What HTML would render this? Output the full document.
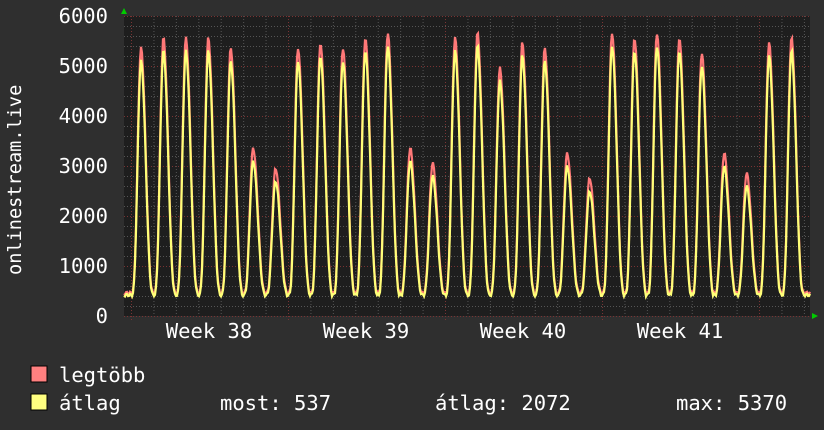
<!DOCTYPE html>
<html><head><meta charset="utf-8"><style>
html,body{margin:0;padding:0;background:#2f2f2f;width:824px;height:430px;overflow:hidden}
svg{display:block}
text{font-family:"DejaVu Sans Mono","Liberation Mono",monospace;fill:#fff}
</style></head><body>
<svg id="g" width="824" height="430" xmlns="http://www.w3.org/2000/svg">
<rect width="824" height="430" fill="#2f2f2f"/>
<rect x="124" y="16" width="686" height="300" fill="#1e1e1e"/>
<g id="grid"></g>
<path id="mx" fill="none" stroke="#ff7878" stroke-width="2.2"/>
<path id="av" fill="none" stroke="#ffff78" stroke-width="2.2"/>
<polygon points="121,14 127,14 124,8" fill="#00cc00"/>
<polygon points="812,313 812,319 818,316" fill="#00cc00"/>
<g font-size="20.5" text-anchor="end">
<text x="108" y="23">6000</text><text x="108" y="73">5000</text><text x="108" y="123">4000</text>
<text x="108" y="173">3000</text><text x="108" y="223">2000</text><text x="108" y="273">1000</text>
<text x="108" y="323">0</text></g>
<text transform="translate(21,275) rotate(-90)" font-size="18.6">onlinestream.live</text>
<g font-size="20.5" text-anchor="middle">
<text x="209" y="338">Week 38</text><text x="366" y="338">Week 39</text>
<text x="523" y="338">Week 40</text><text x="680" y="338">Week 41</text></g>
<rect x="31" y="366" width="16" height="16" fill="#ff8080" stroke="#000" stroke-width="1"/>
<rect x="31" y="394" width="16" height="16" fill="#ffff80" stroke="#000" stroke-width="1"/>
<g font-size="20.5">
<text x="59" y="382">legtöbb</text>
<text x="59" y="410">átlag</text>
<text x="220" y="410">most: 537</text>
<text x="435" y="410">átlag: 2072</text>
<text x="676" y="410">max: 5370</text></g>
</svg>
<script>
var NS="http://www.w3.org/2000/svg",grid=document.getElementById("grid");
function ln(x1,y1,x2,y2,c){var l=document.createElementNS(NS,"line");l.setAttribute("x1",x1);l.setAttribute("y1",y1);l.setAttribute("x2",x2);l.setAttribute("y2",y2);l.setAttribute("stroke",c);l.setAttribute("stroke-width","1");l.setAttribute("stroke-dasharray","1,2");grid.appendChild(l);}
for(var v=0;v<=6000;v+=200){var y=316-v*0.05+0.5;ln(124,y,810,y,v%1000==0?"#7a3434":"#555");}
for(var x=131.5;x<810;x+=22.43){ln(x,16,x,316,"#555");}
for(var x=131.5;x<810;x+=157){ln(x,16,x,320,"#7a3434");}
var peaks=[5100,5300,5300,5300,5100,3100,2700,5100,5200,5100,5300,5400,3100,2800,5300,5400,4700,5200,5100,3000,2500,5400,5300,5400,5300,5000,3000,2600,5200,5300];
var px0=141,step=22.43;
function val(x,extra){var i=Math.round((x-px0)/step);if(i<0)i=0;if(i>=peaks.length)i=peaks.length-1;
var d=(x-(px0+i*step))/step; /* -0.5..0.5 */
var t;if(d<0){t=d/0.42;}else{t=d/0.58;} if(t<-1)t=-1;if(t>1)t=1;
var f=Math.pow((1+Math.cos(Math.PI*t))/2,1.6);
var b=420;var p=peaks[i]+extra;return b+(p-b)*f;}
var a="",m="";
for(var x=124;x<=810;x+=1){var s=Math.sin(x*1.7)*30;var va=val(x,0)+s,vm=val(x,220)+s+40;a+=(x==124?"M":"L")+x+","+(316-va*0.05).toFixed(1);m+=(x==124?"M":"L")+x+","+(316-vm*0.05).toFixed(1);}
document.getElementById("av").setAttribute("d",a);document.getElementById("mx").setAttribute("d",m);
</script>
</body></html>
